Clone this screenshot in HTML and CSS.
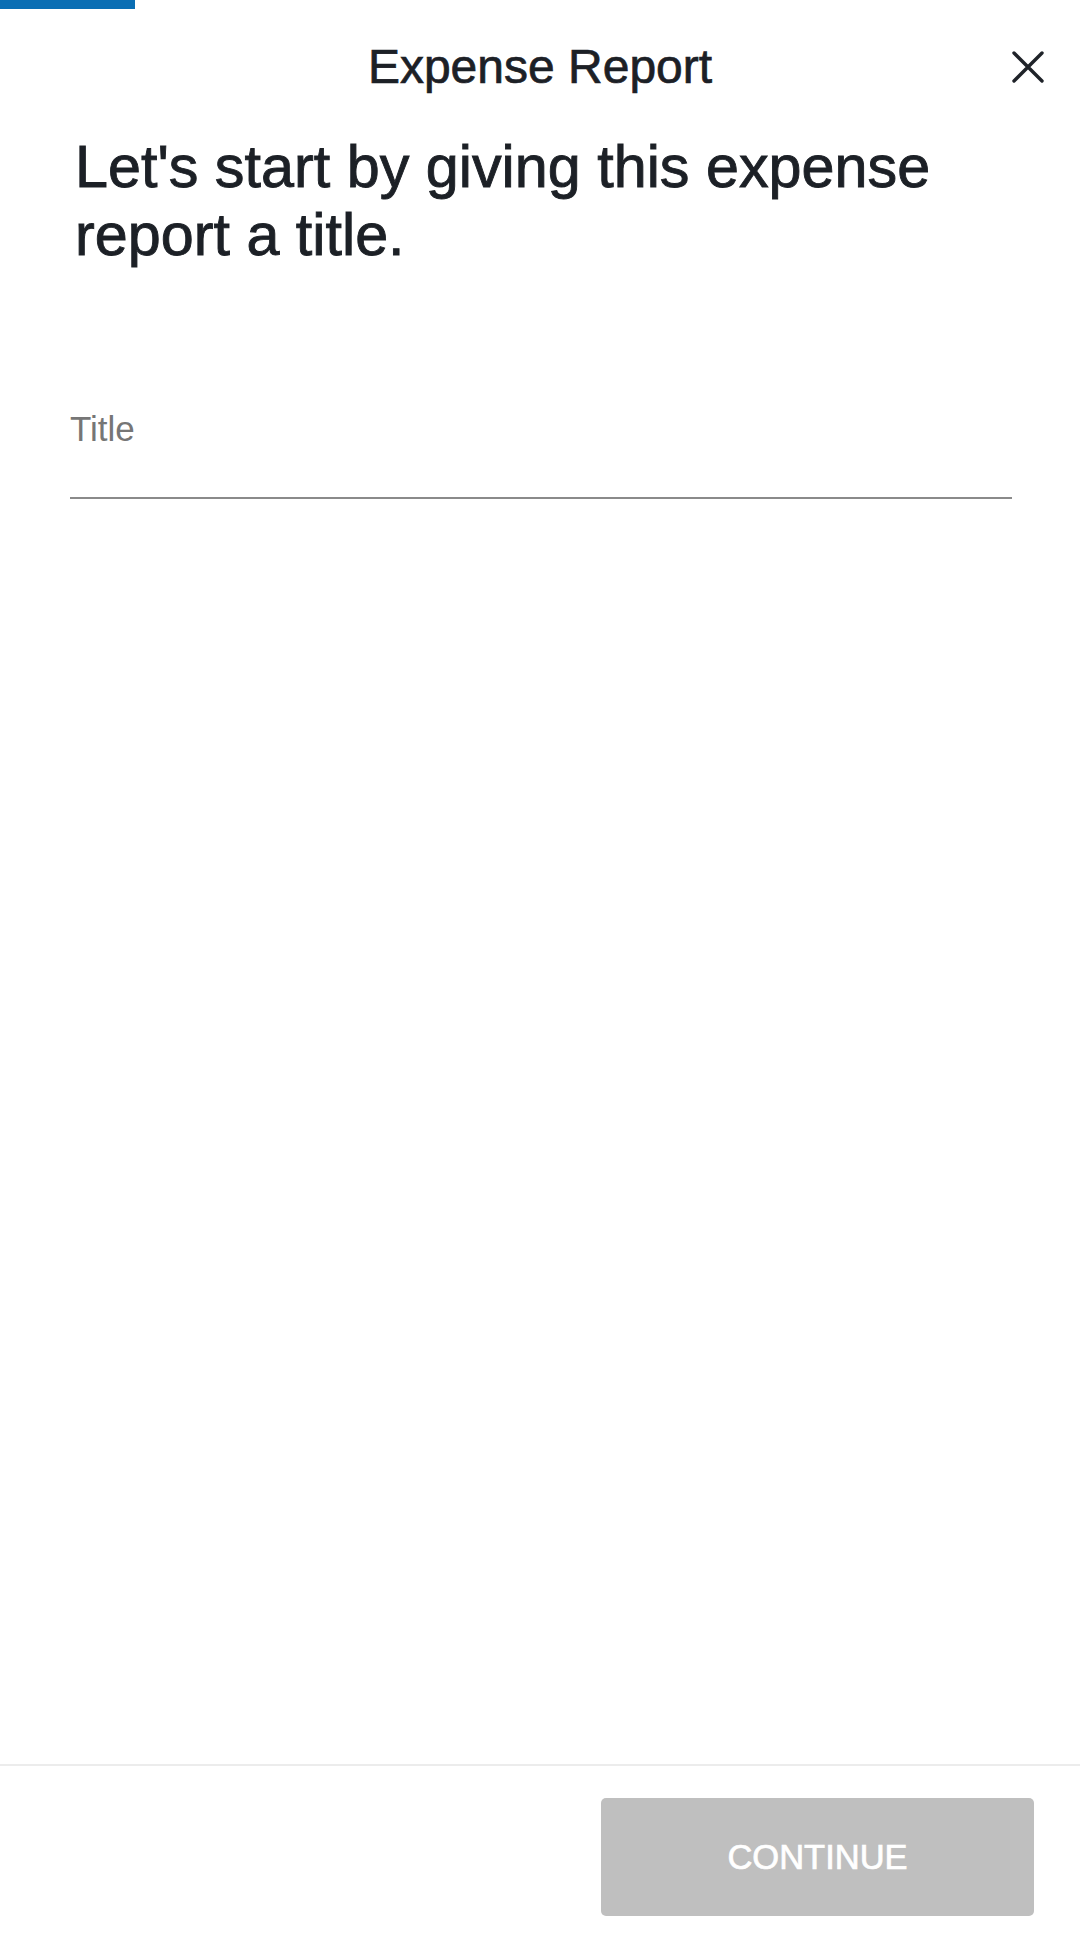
FILE: index.html
```html
<!DOCTYPE html>
<html lang="en">
<head>
<meta charset="utf-8">
<title>Expense Report</title>
<link rel="stylesheet" href="styles.css">
</head>
<body>
<div class="page">
  <div class="progress"><div class="progress-fill"></div></div>
  <header class="header">
    <div class="header-side"></div>
    <h1 class="header-title">Expense Report</h1>
    <div class="header-side header-right">
      <button class="close" aria-label="Close">
        <svg width="32" height="32" viewBox="0 0 32 32"><path d="M2 2 L30 30 M30 2 L2 30" stroke="#1f2329" stroke-width="3.4" stroke-linecap="round" fill="none"/></svg>
      </button>
    </div>
  </header>
  <main class="main">
    <h2 class="prompt">Let's start by giving this expense report a title.</h2>
    <div class="field">
      <label class="field-label">Title</label>
    </div>
  </main>
  <footer class="footer">
    <button class="continue">CONTINUE</button>
  </footer>
</div>
</body>
</html>
```
FILE: styles.css
```css
html, body {
  margin: 0;
  padding: 0;
  background: #ffffff;
}
body {
  font-family: "Liberation Sans", Arial, Helvetica, sans-serif;
  color: #1c2026;
}
.page {
  height: 1950px;
  display: flex;
  flex-direction: column;
}
.progress {
  height: 9px;
}
.progress-fill {
  width: 135px;
  height: 9px;
  background: #0a6eb4;
}
.header {
  height: 116px;
  display: grid;
  grid-template-columns: 1fr auto 1fr;
  align-items: center;
}
.header-title {
  margin: 0;
  font-size: 48px;
  font-weight: normal;
  line-height: 56px;
  color: #1c2026;
  -webkit-text-stroke: 0.7px #1c2026;
  white-space: nowrap;
}
.header-right {
  display: flex;
  justify-content: flex-end;
  padding-right: 36px;
}
.close {
  border: 0;
  background: none;
  padding: 0;
  width: 32px;
  height: 32px;
  display: flex;
}
.main {
  flex: 1;
}
.prompt {
  margin: 8px 30px 0 75px;
  font-size: 59.3px;
  line-height: 68px;
  font-weight: normal;
  color: #1c2026;
  -webkit-text-stroke: 0.9px #1c2026;
}
.field {
  margin: 140px 68px 0 70px;
  border-bottom: 2px solid #8a8a8a;
  padding-bottom: 48px;
}
.field-label {
  display: block;
  font-size: 35px;
  line-height: 40px;
  color: #767676;
}
.footer {
  border-top: 2px solid #ececec;
  padding: 32px 46px 34px 0;
  display: flex;
  justify-content: flex-end;
}
.continue {
  width: 433px;
  height: 118px;
  border: 0;
  border-radius: 5px;
  background: #bfbfbf;
  color: #ffffff;
  font-family: "Liberation Sans", Arial, Helvetica, sans-serif;
  font-size: 34.5px;
  -webkit-text-stroke: 0.7px #ffffff;
  padding: 0;
}
```
